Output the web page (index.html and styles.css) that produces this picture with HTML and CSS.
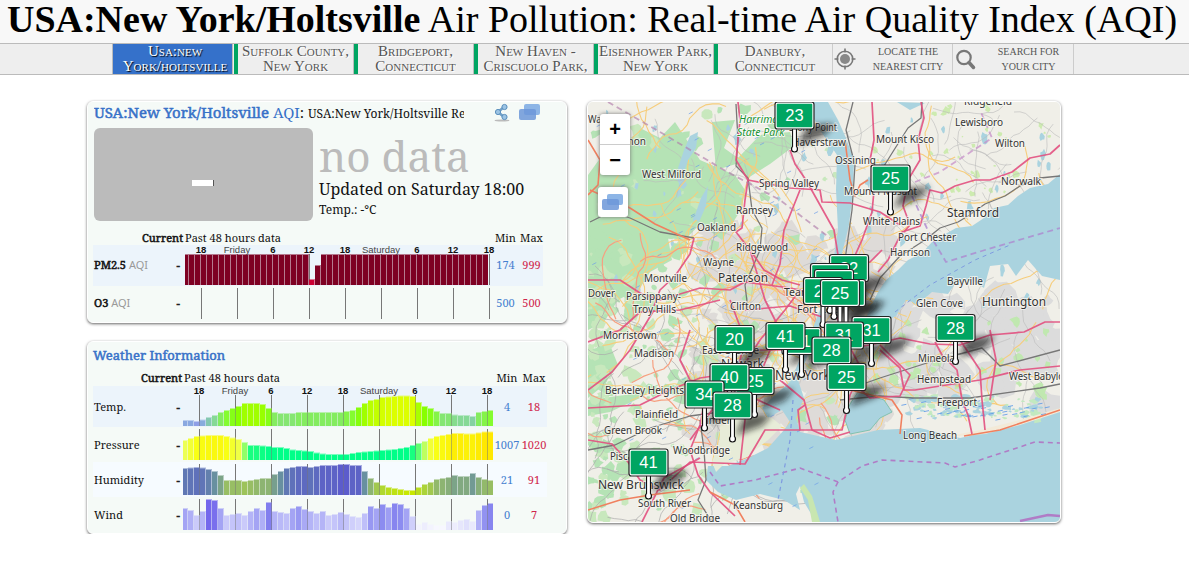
FILE: index.html
```html
<!DOCTYPE html>
<html lang="en">
<head>
<meta charset="utf-8">
<title>USA:New York/Holtsville Air Pollution: Real-time Air Quality Index (AQI)</title>
<link rel="stylesheet" href="styles.css">
</head>
<body>
<h1 class="title"><b>USA:New York/Holtsville</b> Air Pollution: Real-time Air Quality Index (AQI)</h1>
<nav class="nav">
  <a class="station active">Usa:new<br>York/holtsville</a>
  <a class="station">Suffolk County,<br>New York</a>
  <a class="station">Bridgeport,<br>Connecticut</a>
  <a class="station">New Haven -<br>Criscuolo Park,</a>
  <a class="station">Eisenhower Park,<br>New York</a>
  <a class="station last">Danbury,<br>Connecticut</a>
  <a class="tool"><svg width="24" height="24" viewBox="0 0 24 24"><g fill="none" stroke="#777" stroke-width="1.6"><circle cx="12" cy="12" r="7.8"/><path d="M12 1.500v4M12 18.500v4M1.500 12h4M18.500 12h4"/></g><circle cx="12" cy="12" r="5" fill="#888"/></svg><span>LOCATE THE<br>NEAREST CITY</span></a>
  <a class="tool"><svg width="24" height="24" viewBox="0 0 24 24"><circle cx="11" cy="10.500" r="6.700" fill="none" stroke="#777" stroke-width="2.200"/><path d="M16 15.500l4.500 5" stroke="#777" stroke-width="3.500" stroke-linecap="round"/></svg><span>SEARCH FOR<br>YOUR CITY</span></a>
</nav>
<main class="main">
  <div class="column">
    <section class="card aqi">
      <header class="head">
        <div class="name"><b>USA:New York/Holtsville</b> <i>AQI</i>: <small>USA:New York/Holtsville Re</small></div>
        <svg class="share" width="18" height="20" viewBox="0 0 18 20"><ellipse cx="9" cy="17.500" rx="7.500" ry="1" fill="#bbb"/><path d="M11 4L5 9l6 5" fill="none" stroke="#6f9fc8" stroke-width="2.500"/><g fill="#9cc4e4" stroke="#5a8fbd"><circle cx="11.500" cy="4" r="2.600"/><circle cx="5" cy="9" r="2.600"/><circle cx="11.500" cy="14" r="2.600"/></g></svg>
        <svg width="22" height="17" viewBox="0 0 22 17"><rect x="5" width="16" height="11" rx="2" fill="#8db5e6"/><rect y="5" width="17" height="11" rx="2" fill="#6c96d8" opacity=".85"/></svg>
      </header>
      <div class="reading">
        <div class="value"><span class="dash"></span></div>
        <div class="status"><strong>no data</strong><p>Updated on Saturday 18:00</p><small>Temp.: -°C</small></div>
      </div>
      <div class="grid grid-aqi">
        <b class="cur">Current</b><span class="past">Past 48 hours data</span><span class="mm">Min</span><span class="mm">Max</span>
        <div class="row tinted"><span class="label"><span><b>PM2.5</b> <i>AQI</i></span><b>-</b></span><svg class="chart" data-set="pm" width="308" height="41"></svg><span class="min">174</span><span class="max">999</span></div>
        <div class="row"><span class="label"><span><b>O3</b> <i>AQI</i></span><b>-</b></span><svg class="chart" data-set="o3" width="308" height="35"></svg><span class="min">500</span><span class="max">500</span></div>
      </div>
    </section>
    <section class="card weather">
      <h2>Weather Information</h2>
      <div class="grid grid-weather">
        <b class="cur">Current</b><span class="past">Past 48 hours data</span><span class="mm">Min</span><span class="mm">Max</span>
        <div class="row tinted"><span class="label">Temp.<b>-</b></span><svg class="chart" data-set="temp" width="310" height="41"></svg><span class="min">4</span><span class="max">18</span></div>
        <div class="row"><span class="label">Pressure<b>-</b></span><svg class="chart" data-set="pressure" width="310" height="35"></svg><span class="min">1007</span><span class="max">1020</span></div>
        <div class="row pale"><span class="label">Humidity<b>-</b></span><svg class="chart" data-set="humidity" width="310" height="35"></svg><span class="min">21</span><span class="max">91</span></div>
        <div class="row"><span class="label">Wind<b>-</b></span><svg class="chart" data-set="wind" width="310" height="35"></svg><span class="min">0</span><span class="max">7</span></div>
      </div>
    </section>
  </div>
  <section class="card map">
    <svg id="map" width="472" height="420" viewBox="588 102 472 420"></svg>
    <div class="zoom"><span>+</span><span>−</span></div>
    <div class="layers"><svg width="22" height="17" viewBox="0 0 22 17"><rect x="5" width="16" height="11" rx="2" fill="#8db5e6"/><rect y="5" width="17" height="11" rx="2" fill="#6c96d8" opacity=".85"/></svg></div>
  </section>
</main>
<script src="app.js"></script>
</body>
</html>
```
FILE: styles.css
```css
* { box-sizing: border-box; }
body { margin: 0; background: #fff; color: #111; font-family: "Noto Serif", "Droid Serif", "DejaVu Serif Condensed", "DejaVu Serif", serif; }
i { font-style: normal; }
.title { margin: 0; height: 43px; padding-right: 5px; background: #f8f8f8; color: #000; font: 38px/39px "Liberation Serif", serif; display: flex; justify-content: center; white-space: pre; }
.nav { height: 32px; display: flex; background: #eee; border-top: 1px solid #bbb; border-bottom: 1px solid #bbb; padding-left: 112px; font: 15px/15px "Liberation Serif", serif; color: #555; }
.station { width: 120px; height: 30px; border-left: 4px solid #00a562; border-right: 1px solid #bbb; margin-left: 1px; margin-right: -1px; text-align: center; font-variant: small-caps; text-shadow: 1px 1px 0 #fff; white-space: nowrap; }
.station.active { width: 121px; margin-left: 0; margin-right: 0; background: #3571ca; border-left: 1px solid #bbb; padding-left: 5px; color: #fff; text-shadow: 1px 1px 1px #000; }
.station.last { width: 119px; }
.tool { width: 120px; height: 30px; display: flex; align-items: center; border-left: 1px solid #ccc; font-size: 10px; line-height: 15px; text-align: center; }
.tool:last-child { width: 122px; border-right: 1px solid #ccc; }
.tool span { flex: 1; padding-left: 7px; }
.main { display: flex; gap: 20px; padding: 26px 0 0 87px; align-items: flex-start; }
.column { display: flex; flex-direction: column; gap: 18px; width: 480px; }
.card { background: #f5faf7; border: 1px solid #fff; border-radius: 6px; box-shadow: 0 1px 3px #666; overflow: hidden; }
.card b, .weather h2 { font-weight: 400; -webkit-text-stroke: .5px currentColor; }
.aqi { height: 222px; padding-left: 6px; }
.head { display: flex; height: 26px; align-items: flex-start; }
.head svg { margin-top: 2px; }
.head .share { margin: 1px 8px 0 29px; }
.name { width: 370px; font-size: 15px; line-height: 20px; white-space: nowrap; overflow: hidden; }
.name b, .name i { color: #3771c8; }
.name small { font-size: 12px; }
.reading { display: flex; gap: 6px; height: 103px; }
.value { width: 219px; height: 93px; background: #bbb; border-radius: 6px; display: flex; align-items: center; justify-content: center; padding-top: 17px; }
.dash { width: 21px; height: 6px; margin-right: 2px; background: #fff; box-shadow: 1px 0 0 #555; }
.status { white-space: nowrap; }
.status strong { display: block; font-weight: 400; font-size: 42.200px; line-height: 49px; height: 50px; color: #bbb; padding-top: 3px; }
.status p { margin: 0; font-size: 16px; line-height: 22px; }
.status small { display: block; font-size: 12px; line-height: 20px; }
.grid { display: grid; font-size: 11px; line-height: 14px; margin-left: -1px; white-space: nowrap; }
.grid-aqi { grid-template-columns: 90px 308px 29px 23px; grid-template-rows: 14px 41px 35px; width: 450px; }
.grid-weather { grid-template-columns: 90px 310px 28px 26px; grid-template-rows: 14px 41px 35px 35px 35px; width: 454px; }
.row { grid-column: 1 / -1; display: grid; grid-template-columns: subgrid; align-items: center; }
.tinted { background: #ecf4fb; }
.pale { background: #f6fbff; }
.cur { text-align: right; }
.past { padding-left: 2px; }
.grid-weather .cur, .grid-weather .past, .grid-weather > .mm { position: relative; top: -1px; }
.grid-weather .past { padding-left: 1px; }
.grid-weather .cur { padding-right: 1px; }
.mm, .min, .max { display: flex; justify-content: center; }
.min { color: #4480d0; }
.max { color: #d0264c; }
.label { display: flex; justify-content: space-between; padding: 0 3px 0 1px; }
.grid-aqi .label, .grid-aqi .min, .grid-aqi .max { margin-top: -2px; }
.label i { font-family: "Noto Sans", sans-serif; color: #999; }
.chart { display: block; font-family: "Liberation Sans", sans-serif; font-size: 9.500px; overflow: visible; }
.weather { height: 193px; padding-left: 6px; }
.weather h2 { margin: 0; height: 30px; color: #3771c8; font-size: 13px; line-height: 26px; margin-left: -1px; }
.map { width: 474px; height: 422px; position: relative; }
.map > svg { display: block; font-family: "Noto Sans", sans-serif; }
.zoom, .layers { position: absolute; background: #fff; border-radius: 3px; box-shadow: 0 0 4px #777; }
.zoom { left: 12px; top: 12px; width: 30px; height: 61px; display: flex; flex-direction: column; font: bold 20px/30px "Liberation Sans", sans-serif; text-align: center; color: #000; }
.zoom span + span { border-top: 1px solid #ccc; }
.layers { left: 10px; top: 85px; width: 30px; height: 30px; display: flex; align-items: center; justify-content: center; }
```
FILE: app.js
```js
const mix = (stops, v) => {
  if (v <= stops[0][0]) return `rgb(${stops[0][1]})`;
  for (let i = 1; i < stops.length; i++) {
    const [a, ca] = stops[i - 1], [b, cb] = stops[i];
    if (v <= b) return `rgb(${ca.map((c, j) => Math.round(c + (cb[j] - c) * (v - a) / (b - a)))})`;
  }
  return `rgb(${stops[stops.length - 1][1]})`;
};
const ramps = {
  pm: [[0, [204, 0, 51]], [8, [204, 0, 51]], [12, [126, 0, 35]]],
  temp: [[5, [143, 159, 230]], [6.5, [136, 172, 221]], [9, [132, 200, 176]], [11, [134, 217, 150]], [14, [132, 236, 96]], [16, [132, 252, 48]], [20, [136, 255, 0]], [24, [168, 255, 0]], [30, [220, 255, 0]]],
  pressure: [[14, [0, 255, 136]], [16, [48, 255, 120]], [18, [144, 255, 104]], [20, [236, 255, 85]], [24, [248, 255, 20]], [28, [255, 232, 0]]],
  humidity: [[5, [200, 232, 0]], [10, [176, 216, 48]], [15, [152, 190, 100]], [20, [124, 164, 136]], [24, [104, 144, 160]], [27, [96, 120, 180]], [31, [92, 92, 204]]],
  wind: [[4, [250, 250, 255]], [10, [230, 230, 252]], [16, [196, 196, 250]], [22, [164, 164, 244]], [26, [140, 140, 240]], [31, [116, 104, 236]]]
};
const data = {
  pm: Array.from({ length: 51 }, (_, i) => i === 21 ? 6 : i === 22 ? 20 : 31),
  o3: [],
  temp: [6,6,5,6.5,9,11,14,16,18,20,23,23,23,22,18,14,13,13,13,14,14,14,14,14,14,14,14,15,16,19,23,26,27,29,29.5,30,30.5,30.5,30,24,20,18,15,13,13,11.5,11,11,10,14,15,16],
  pressure: [20,22,24,24.5,25,25,25,24,22.5,21,18,15,15,14.5,14,13,13,12,10.5,10,9.5,9,7.5,6.5,6,6,6,6,7,8,8.5,9,9.5,10,10.5,11,12,13,15,17,19,22,24,25,26,27,27,26.5,26.5,27.5,28.5,28.5],
  humidity: [27,27.5,28,27.5,26,24,20,15,15,15,14,15,16,17,17,21,24,27,28,29,29,28,29,30,30,30,31,31,30,30,24,17,13,10,8,7,6,5,5,8,11,13,16,17,18,20,19,19,22,18,16,15],
  wind: [22,20,15,19,31,30,22,15,16,17,15,19,22,20,28,19,18,17,22,24,21,19,17,19,15,16,18,16,14,13,17,24,22,26,23,27,26,22,14,6,8,6,5,5,9,8,10,11,9,20,25,27]
};
for (const svg of document.querySelectorAll('.chart')) {
  const key = svg.dataset.set, air = key === 'pm' || key === 'o3';
  const top = key === 'pm' || key === 'temp', base = top ? 40 : 33;
  const first = air ? 18 : 16;
  let out = '';
  for (let i = 0; i < 9; i++) out += `<rect x="${first + 36 * i}" y="${base - 31}" width="1" height="31" fill="#777"/>`;
  data[key].forEach((h, i) => {
    const start = (air ? 0 : -1) + 6 * i, x = Math.max(start, air ? 2 : 0), w = start + 5 - x;
    const c = mix(ramps[key], h), gap = i < data[key].length - 1 ? 1 : 0;
    out += `<rect x="${x}" y="${base - h}" width="${w + gap}" height="${h}" fill="${c}" opacity=".5"/><rect x="${x}" y="${base - h + 1}" width="${w}" height="${h - 1}" fill="${c}"/>`;
  });
  if (top) ['18', 'Friday', '6', '12', '18', 'Saturday', '6', '12', '18'].forEach((t, i) => {
    out += `<text x="${first + 36 * i}" y="8" text-anchor="middle" fill="${t.length > 2 ? '#444' : '#111'}" font-weight="${t.length > 2 ? 400 : 700}">${t}</text>`;
  });
  svg.innerHTML = out;
}

let seed = 7;
const rnd = () => (seed = (seed * 16807) % 2147483647) / 2147483647;
const water = '#aad3df';
const poly = (p, fill, extra = '') => `<path d="M${p}Z" fill="${fill}" ${extra}/>`;
const line = (p, stroke, w, extra = '') => `<polyline points="${p}" fill="none" stroke="${stroke}" stroke-width="${w}" stroke-linejoin="round" ${extra}/>`;
let m = '<defs><filter id="soft" x="-50%" y="-50%" width="200%" height="200%"><feGaussianBlur stdDeviation="3"/></filter></defs><rect x="588" y="102" width="472" height="420" fill="#f0efe8"/>';
const blob = (x, y, r, fill, squash = 1) => {
  const n = 9, pts = [];
  for (let i = 0; i < n; i++) { const a = i / n * 6.283, q = r * (.5 + rnd() * .7); pts.push(`${(x + q * Math.cos(a)).toFixed(1)},${(y + q * squash * Math.sin(a)).toFixed(1)}`); }
  return poly(pts.join(' '), fill);
};
// Built-up areas
for (let i = 0; i < 170; i++) m += blob(690 + rnd() * 200, 220 + rnd() * 230, 5 + rnd() * 13, '#dedbd8');
for (let i = 0; i < 70; i++) m += blob(880 + rnd() * 180, 300 + rnd() * 110, 6 + rnd() * 14, '#dcdcdc');
// Woodland and parks
m += poly('588,175 606,150 630,150 640,128 660,138 675,122 700,160 735,175 745,190 742,208 722,240 700,224 685,240 668,238 672,260 650,272 640,288 618,300 604,322 588,330', '#b5e3b5');
m += poly('712,122 735,120 724,148 738,158 760,135 790,132 794,146 770,164 748,178 736,164 716,170', '#b5e3b5');
m += poly('588,355 610,345 618,365 604,385 588,398', '#b5e3b5');
m += poly('588,400 625,395 660,384 640,398 610,412 588,416', '#b5e3b5');
for (let i = 0; i < 150; i++) m += blob(588 + rnd() * 260, 110 + rnd() * 390, 2 + rnd() * 6, rnd() < .5 ? '#c8e8bd' : '#b5e3b5');
for (let i = 0; i < 160; i++) m += blob(588 + rnd() * rnd() * 150, 230 + rnd() * 290, 2 + rnd() * 7, rnd() < .5 ? '#c8e8bd' : '#b5e3b5');
for (let i = 0; i < 45; i++) m += blob(860 + rnd() * 200, 102 + rnd() * 110, 1 + rnd() * 3, '#cdebb0');
for (let i = 0; i < 50; i++) m += blob(860 + rnd() * 200, 320 + rnd() * 80, 2 + rnd() * 4, '#c0e8b0');
for (let i = 0; i < 70; i++) m += blob(600 + rnd() * 450, 110 + rnd() * 200, 1 + rnd() * 3, water, 1.8);
// Local streets: wandering paths by heading
const wander = (x, y, a, n, step, c, w) => {
  const pts = [];
  for (let i = 0; i < n; i++) { pts.push(`${x.toFixed(1)},${y.toFixed(1)}`); a += (rnd() - .5) * .9; x += Math.cos(a) * step; y += Math.sin(a) * step; }
  return line(pts.join(' '), c, w);
};
for (let i = 0; i < 130; i++) m += wander(690 + rnd() * 370, 110 + rnd() * 300, rnd() * 6.28, 12, 6, '#bbb', .6);
for (let i = 0; i < 40; i++) m += wander(588 + rnd() * 150, 270 + rnd() * 250, rnd() * 6.28, 14, 7, '#aaa', .7);
for (let i = 0; i < 100; i++) m += wander(680 + rnd() * 200, 220 + rnd() * 220, rnd() * 6.28, 11, 6, '#f8cf78', 1);
for (let i = 0; i < 55; i++) m += wander(588 + rnd() * 472, 105 + rnd() * 310, rnd() * 6.28, 16, 7, '#f6cd7c', 1.1);
for (let i = 0; i < 24; i++) m += wander(600 + rnd() * 260, 260 + rnd() * 260, rnd() * 6.28, 14, 7, '#f6a080', 1.2);
// Sound, bays, rivers and ocean
m += poly('1060,174 1048,184 1030,188 1018,196 1008,205 994,208 984,218 972,226 956,228 942,236 932,242 922,253 908,260 898,270 886,280 878,292 872,304 866,318 880,324 896,316 906,300 918,304 932,292 948,294 955,284 972,280 984,288 990,266 1008,264 1016,276 1028,260 1042,276 1060,280', water);
m += poly('828,102 838,120 846,138 854,160 853,190 849,225 838,270 826,310 810,350 798,380 804,398 796,418 800,432 836,440 878,430 920,428 960,438 998,430 1032,418 1060,408 1060,522 816,522 804,502 800,486 796,494 800,510 784,500 760,494 736,500 718,492 706,480 708,466 728,466 748,458 768,448 784,430 790,422 782,410 768,418 762,408 774,396 790,382 804,350 820,310 832,270 838,230 836,190 837,155 820,130 812,115 814,102', water);
m += poly('897,102 910,110 925,103', water);
m += poly('690,136 698,132 696,148 688,160 682,178 678,168 684,150', water);
m += poly('701,198 708,186 706,206 699,222 694,218', water);
m += poly('858,392 884,400 892,412 880,418 870,430 850,434 845,420 850,404', water, 'stroke="#82c2b0"');
m += poly('720,410 738,412 772,418 782,426 768,440 745,458 724,464 716,472 712,462 720,440', '#e7ecd8');
m += poly('800,488 808,500 812,522 820,522 812,496 804,484', '#c8e6b0');
for (let i = 0; i < 90; i++) m += blob(905 + rnd() * 140, 402 + rnd() * 20 - rnd() * 8, 1.5 + rnd() * 4, i % 2 ? water : '#c2e9c0', .6);
m += poly('944,437 980,430 1020,420 1060,408 1060,412 1020,425 985,434', '#f3ead8');
for (let i = 0; i < 40; i++) { const x = 900 + rnd() * 150, y = 398 + rnd() * 24; m += line(`${x},${y} ${x + 5},${y - 1}`, '#5795e8', .8); }
for (let i = 0; i < 80; i++) { const x = 590 + rnd() * 230, y = 110 + rnd() * 400; m += line(`${x},${y} ${x + 4},${y - 2}`, '#6f9fe8', .7); }
// Rail
['736,104 738,140 736,166 748,178 752,210 762,228 760,250 745,285 748,310', '853,102 846,130 855,165 852,210 845,260 835,300', '922,102 921,118 908,128 894,150 884,166', '1060,176 1040,178 1020,186 1005,196 985,204 968,216 958,222 940,228 925,240 900,256 880,278 870,300', '846,390 880,378 930,362 982,348 1000,366 1060,350', '840,400 880,396 914,398 970,398 1040,388 1060,384', '588,450 615,445 650,428 690,416 720,412', '590,222 610,212 630,218 660,232 694,238', '700,420 704,450 706,480 698,500 712,522'].forEach(p => m += line(p, '#777', 1.3));
// Motorways
['588,280 620,280 640,293 660,300 700,288 730,290 745,282 790,288 830,296', '694,238 690,254 675,276 660,290 654,306', '738,102 740,120 736,160 748,180 745,200 742,228 736,232 750,250 764,270 782,280 800,285', '748,180 790,188 820,190 822,202 850,203 880,212 900,225', '790,150 795,164 806,180 820,205 834,230 838,255 836,285', '800,190 784,230 780,264 772,285', '921,102 924,118 918,140 920,160 908,180 903,206 910,225 904,232', '1060,145 1050,154 1030,158 1012,172 990,180 975,180 955,186 942,193 930,190 926,206 920,226 902,232 888,260 878,272', '872,102 874,140 870,160 875,180 872,212 862,240 852,262', '588,390 612,372 630,350 654,310', '588,408 640,405 670,390 700,378 740,372', '588,342 620,330 640,312 680,310 720,300', '588,440 612,444 628,462 640,480 660,490 690,462 745,464 765,430 800,430', '690,330 680,360 690,380 740,392 780,410', '705,400 700,425 690,450 698,475 710,492 735,516', '642,522 664,478 700,458', '730,300 745,340 735,380 745,420 740,465', '690,440 712,410 728,390 760,340 785,310 800,290', '830,300 846,340 862,370 850,395 842,430 800,430 798,410 805,405', '836,350 870,345 900,338 930,344 960,345 990,335 1024,332 1045,322 1060,322', '880,350 900,368 904,390 915,390 940,386 980,380 1020,370 1060,366', '935,342 942,355 957,370 962,400 968,415 972,434', '960,340 980,370 982,400 985,430', '990,330 996,360 990,400', '838,370 870,398 900,396 910,375 880,345', '780,380 804,400 812,430 830,438 850,432', '720,350 760,350 790,350 820,345', '750,250 765,300 780,330 770,350 760,375', '840,270 870,262 882,250', '745,310 790,306 825,318'].forEach(p => m += line(p, '#e2507f', 1.7, 'opacity=".9"'));
['588,140 600,160 598,185 588,195', '590,190 630,208 655,224 690,240', '845,140 850,180 855,196 860,185 868,180', '850,390 892,400 902,415 900,434', '710,492 735,505 745,522', '588,510 620,500 650,495 690,490', '964,436 1000,430 1060,410'].forEach(p => m += line(p, '#f0805f', 1.6));
// Boundaries
m += line('608,102 660,132 724,170 780,200 830,238', '#b07dab', 1.8, 'stroke-dasharray="6 4" opacity=".65"');
m += line('915,182 940,172 992,138 980,110', '#c48ac8', 1.8, 'stroke-dasharray="6 4" opacity=".7"');
m += line('912,196 930,235 946,262 985,250 1060,228', '#ad88cf', 1.8, 'stroke-dasharray="6 4" opacity=".8"');
m += line('710,472 720,486 755,480 800,468 838,482 862,466 882,460 945,463 955,467 980,460 1035,442 1060,443', '#b07cc6', 1.6, 'stroke-dasharray="5 4"');
m += line('838,482 833,492 838,522', '#b07cc6', 1.6, 'stroke-dasharray="5 4"');
m += line('1020,521 1048,515 1060,516', '#b07cc6', 2.5);
m += line('793,400 790,440 778,500', '#7f9be0', 1.2, 'stroke-dasharray="4 4"');
m += line('895,312 930,285 975,260 1010,245', '#7f9be0', 1, 'stroke-dasharray="4 4"');
// Place names: text, x, baseline, width, size
[['West Milford',642,178,59,11],['Spring Valley',759,187,60,11],['Ramsey',736,214,37,11],['Oakland',697,231,39,11],['Ridgewood',736,251,52,11],['Wayne',703,266,31,11],['Paterson',718,282,50,13],['Montville',644,282,43,11],['Dover',588,297,27,11],['Parsippany-',626,300,55,11],['Troy Hills',633,313,43,11],['Clifton',730,310,31,11],['Teaneck',784,296,40,11],['Fort Lee',797,313,41,11],['Lewisboro',955,126,48,11],['Ridgefield',964,105,48,11],['Mount Kisco',876,143,58,11],['Wilton',995,147,30,11],['Ossining',835,164,41,11],['Norwalk',1001,185,40,11],['Mount Pleasant',844,195,73,11],['Stamford',947,217,52,13],['White Plains',863,225,57,11],['Port Chester',898,241,58,11],['Harrison',890,256,40,11],['Bayville',947,285,36,11],['Glen Cove',916,307,47,11],['Huntington',982,306,64,13],['Haverstraw',792,146,54,11],['Stony Point',789,131,48,11],['Morristown',603,339,54,11],['Madison',634,357,40,11],['East Orange',702,354,57,11],['Newark',721,368,43,13],['New York',775,380,55,14],['Berkeley Heights',605,394,79,11],['Plainfield',635,418,43,11],['Green Brook',604,434,58,11],['Linden',701,424,32,11],['Woodbridge',673,454,57,11],['Piscataway',610,460,50,11],['New Brunswick',598,489,86,13],['South River',638,507,53,11],['Old Bridge',670,522,50,11],['Keansburg',733,509,50,11],['Mineola',918,362,37,11],['Hempstead',917,383,54,11],['West Babylon',1009,380,61,11],['Freeport',937,406,40,11],['Long Beach',903,439,54,11],['Vernon',612,145,34,11],['Warwick',588,123,36,11]].forEach(([t, x, y, w, s]) => {
  m += `<text x="${x}" y="${y}" textLength="${w}" lengthAdjust="spacingAndGlyphs" font-size="${s}" fill="#333" stroke="#f8f7f2" stroke-width="2" stroke-opacity=".8" paint-order="stroke">${t}</text>`;
});
m += '<g font-size="10.500" font-style="italic" fill="#179030" stroke="#fff" stroke-width="1.500" paint-order="stroke"><text x="739" y="123">Harriman</text><text x="737" y="136">State Park</text></g>';
// Station flags: value, centre x, centre y
const flags = [['23',794.5,115.5],['25',890.5,178.500],['32',849,268],['',830,277],['',834,283],['25',846,293],['28',823,291],['25',840,293],['20',734.5,339],['21',801.5,341],['41',785.5,336],['31',871.5,330],['31',844,335.5],['28',831.5,350.500],['25',846.5,377],['25',754.5,381],['40',729.5,377],['34',704.5,394.500],['28',732.5,405.500],['41',648.5,462.500],['28',955.5,328]];
flags.forEach(([, x, y]) => m += `<path d="M${x + 3} ${y + 30}L${x + 12} ${y + 10}L${x + 40} ${y + 8}L${x + 30} ${y + 20}Z" fill="#111" opacity=".62" filter="url(#soft)"/>`);
flags.forEach(([t, x, y]) => {
  m += `<path d="M${x} ${y + 13}V${y + 33}" stroke="#111" stroke-width="5"/><circle cx="${x}" cy="${y + 33.5}" r="3" fill="#fff" stroke="#111" stroke-width="1.200"/><path d="M${x} ${y + 13}V${y + 33}" stroke="#fff" stroke-width="2.800"/>`;
  m += `<rect x="${x - 19.5}" y="${y - 13.5}" width="39" height="27" rx="2.500" fill="#fff" stroke="#222" stroke-width="1.200"/><rect x="${x - 17.8}" y="${y - 11.8}" width="35.600" height="23.600" rx="1" fill="#00a562"/><text x="${x}" y="${y + 5.5}" text-anchor="middle" fill="#fff" font-family="Liberation Sans, sans-serif" font-size="16.500">${t}</text>`;
});
document.getElementById('map').innerHTML = m;
```
